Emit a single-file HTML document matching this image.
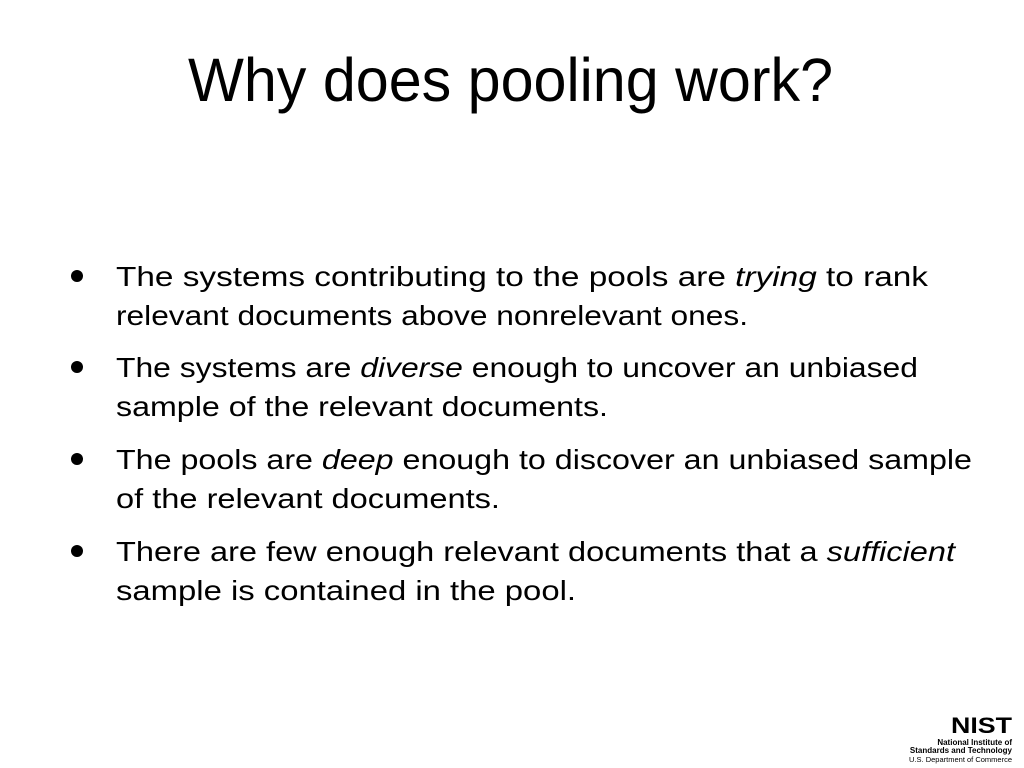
<!DOCTYPE html>
<html><head><meta charset="utf-8"><style>html,body{margin:0;padding:0;background:#fff;width:1024px;height:768px;overflow:hidden}</style></head>
<body>
<svg width="1024" height="768" xmlns="http://www.w3.org/2000/svg" font-family="'Liberation Sans', sans-serif" fill="#000">
<text x="188" y="101" font-size="61" textLength="645" lengthAdjust="spacingAndGlyphs">Why does pooling work?</text>
<g font-size="28" lengthAdjust="spacingAndGlyphs">
<circle cx="77" cy="276" r="6"/>
<text x="116" y="286" textLength="812" lengthAdjust="spacingAndGlyphs">The systems contributing to the pools are <tspan font-style="italic">trying</tspan> to rank</text>
<text x="116" y="325" textLength="632" lengthAdjust="spacingAndGlyphs">relevant documents above nonrelevant ones.</text>
<circle cx="77" cy="367" r="6"/>
<text x="116" y="377" textLength="802" lengthAdjust="spacingAndGlyphs">The systems are <tspan font-style="italic">diverse</tspan> enough to uncover an unbiased</text>
<text x="116" y="416" textLength="492" lengthAdjust="spacingAndGlyphs">sample of the relevant documents.</text>
<circle cx="77" cy="459" r="6"/>
<text x="116" y="469" textLength="856" lengthAdjust="spacingAndGlyphs">The pools are <tspan font-style="italic">deep</tspan> enough to discover an unbiased sample</text>
<text x="116" y="508" textLength="384" lengthAdjust="spacingAndGlyphs">of the relevant documents.</text>
<circle cx="77" cy="551" r="6"/>
<text x="116" y="561" textLength="839" lengthAdjust="spacingAndGlyphs">There are few enough relevant documents that a <tspan font-style="italic">sufficient</tspan></text>
<text x="116" y="600" textLength="460" lengthAdjust="spacingAndGlyphs">sample is contained in the pool.</text>
</g>
<g>
<text x="951" y="733" font-size="22" font-weight="bold" textLength="61" lengthAdjust="spacingAndGlyphs">NIST</text>
<text x="1012" y="745" font-size="8" font-weight="bold" text-anchor="end">National Institute of</text>
<text x="1012" y="753" font-size="8" font-weight="bold" text-anchor="end">Standards and Technology</text>
<text x="1012" y="762" font-size="7.5" text-anchor="end">U.S. Department of Commerce</text>
</g>
</svg>
</body></html>
